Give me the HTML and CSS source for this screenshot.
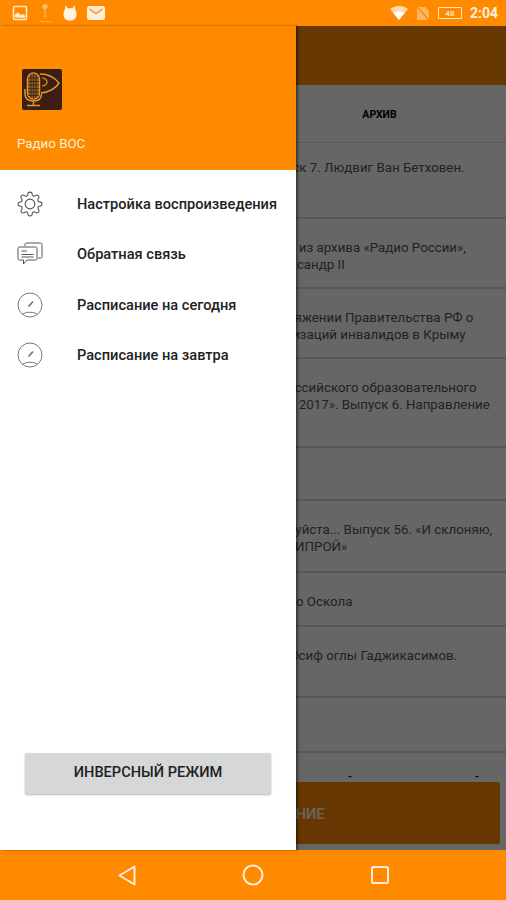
FILE: index.html
```html
<!DOCTYPE html>
<html lang="ru">

<head>
      <meta charset="UTF-8">
      <meta name="viewport" content="width=device-width, initial-scale=1.0">
      <title>Радио ВОС</title>
      <link rel="stylesheet" href="styles.css">
</head>

<body>
      <div class="screen">

            <!-- status bar -->
            <div class="status-bar">
                  <div class="status-left">
                        <svg class="st-icon" width="16" height="16" viewBox="0 0 16 16">
                              <rect x="1.5" y="1.5" width="13" height="13" rx="1.5" fill="none" stroke="#ffe6c8" stroke-width="1.6" />
                              <path d="M3 12.5V9.5l3-2 3 2.5 2-1 2 1.500v2.500z" fill="#ffe6c8" />
                        </svg>
                        <svg class="st-icon dim" width="16" height="20" viewBox="0 0 16 20">
                              <circle cx="8" cy="3.5" r="2.6" fill="#ffe6c8" />
                              <path d="M8 6v6" stroke="#ffd09a" stroke-width="1.4" />
                              <circle cx="8" cy="13" r="2" fill="#ffb765" />
                              <path d="M2 18.5h12" stroke="#ffc585" stroke-width="1" />
                        </svg>
                        <svg class="st-icon" width="16" height="16" viewBox="0 0 16 16">
                              <path d="M3.500 0l2 3.300h5L12.500 0l.6 4.400c.7 1 1.400 2.300 1.400 4.300 0 4.600-2.200 6.800-6.500 6.800s-6.500-2.200-6.500-6.800c0-2 .7-3.300 1.400-4.300z" fill="#fff3e4" />
                        </svg>
                        <svg class="st-icon" width="18" height="14" viewBox="0 0 18 14">
                              <rect width="18" height="14" rx="2.500" fill="#ffeedd" />
                              <path d="M2.500 3l6.500 4.500L15.500 3" fill="none" stroke="#ff9c2c" stroke-width="1.600" />
                        </svg>
                  </div>
                  <div class="status-right">
                        <svg width="18" height="14" viewBox="0 0 18 14">
                              <path d="M0 3C5-1 13-1 18 3L9 14z" fill="#ffd9ac" />
                              <path d="M3.500 7.200c3.300-2.200 7.700-2.200 11 0L9 14z" fill="#fff" />
                        </svg>
                        <svg width="14" height="13" viewBox="0 0 14 13">
                              <path d="M1 0h8l4 4v9H1z" fill="#ffb664" />
                              <path d="M1 0l12 13" stroke="#ff8a00" stroke-width="1.500" />
                        </svg>
                        <div class="battery"><span class="battery-level">48</span></div>
                        <span class="clock">2:04</span>
                  </div>
            </div>

            <div class="main">

                  <!-- page behind the drawer -->
                  <div class="app">
                        <div class="app-bar"></div>
                        <div class="tabs">
                              <div class="tab"></div>
                              <div class="tab">АРХИВ</div>
                        </div>
                        <div class="list">
                              <div class="row h76 first"><p>&nbsp;&nbsp;&nbsp;Выпуск 7. Людвиг Ван Бетховен.</p></div>
                              <div class="row h70"><p>&nbsp;&nbsp;Песни из архива «Радио России»,<br>И. Александр II</p></div>
                              <div class="row h70"><p>распоряжении Правительства РФ о<br>&nbsp;&nbsp;организаций инвалидов в Крыму</p></div>
                              <div class="row h89"><p>&nbsp;для российского образовательного<br>&nbsp;&nbsp;&nbsp;«Путь 2017». Выпуск 6. Направление</p></div>
                              <div class="row h53"></div>
                              <div class="row h72"><p>&nbsp;Пожалуйста... Выпуск 56. «И склоняю,<br>&nbsp;И НЕ СИПРОЙ»</p></div>
                              <div class="row h54"><p>&nbsp;Старого Оскола</p></div>
                              <div class="row h71"><p>&nbsp;Поэт Юсиф оглы Гаджикасимов.</p></div>
                              <div class="row h55"></div>
                              <div class="row-last">
                                    <span class="dash">-</span>
                                    <span class="dash">-</span>
                              </div>
                        </div>
                        <div class="play-wrap">
                              <div class="play-btn">ВОСПРОИЗВЕДЕНИЕ</div>
                        </div>
                  </div>

                  <div class="scrim"></div>

                  <!-- drawer -->
                  <div class="drawer">
                        <div class="drawer-head">
                              <svg class="logo" width="40" height="41" viewBox="0 0 40 41">
                                    <rect width="40" height="41" rx="2" fill="#3a1f12" />
                                    <rect x="5.500" y="4" width="12" height="26" rx="6" fill="#8a5a22" stroke="#e0962c" stroke-width="1.500" />
                                    <path d="M6 9h11M6 12.500h11M6 16h11M6 19.500h11M6 23h11M6 26.500h11M9 5v24M11.500 4v26M14 5v24" stroke="#3a1f12" stroke-width=".8" />
                                    <path d="M3 20v5c0 5 4 7 8.500 7s8-2 8-7" fill="none" stroke="#e0962c" stroke-width="1.500" />
                                    <path d="M11.500 32v4M5 36.500h13" stroke="#e0962c" stroke-width="1.500" />
                                    <path d="M18 5c8 0 15 4 19 9-3 5-10 9-18 10" fill="none" stroke="#e0962c" stroke-width="1.500" />
                                    <path d="M20 9c3 0 5 2 5 4s-2 4-5 4" fill="none" stroke="#e0962c" stroke-width="1.200" />
                              </svg>
                              <span class="drawer-title">Радио ВОС</span>
                        </div>

                        <ul class="menu">
                              <li class="menu-item">
                                    <svg class="menu-icon" width="26" height="26" viewBox="0 0 24 24">
                                          <circle cx="12" cy="12" r="4.500" />
                                          <path d="M19.400 15a1.650 1.650 0 0 0 .33 1.820l.06.06a2 2 0 0 1 0 2.830 2 2 0 0 1-2.830 0l-.06-.06a1.650 1.650 0 0 0-1.820-.33 1.650 1.650 0 0 0-1 1.510V21a2 2 0 0 1-2 2 2 2 0 0 1-2-2v-.09A1.650 1.650 0 0 0 9 19.400a1.650 1.650 0 0 0-1.820.33l-.06.06a2 2 0 0 1-2.830 0 2 2 0 0 1 0-2.830l.06-.06a1.650 1.650 0 0 0 .33-1.820 1.650 1.650 0 0 0-1.510-1H3a2 2 0 0 1-2-2 2 2 0 0 1 2-2h.09A1.650 1.650 0 0 0 4.600 9a1.650 1.650 0 0 0-.33-1.820l-.06-.06a2 2 0 0 1 0-2.830 2 2 0 0 1 2.830 0l.06.06a1.650 1.650 0 0 0 1.820.33H9a1.650 1.650 0 0 0 1-1.510V3a2 2 0 0 1 2-2 2 2 0 0 1 2 2v.09a1.650 1.650 0 0 0 1 1.510 1.650 1.650 0 0 0 1.820-.33l.06-.06a2 2 0 0 1 2.830 0 2 2 0 0 1 0 2.830l-.06.06a1.650 1.650 0 0 0-.33 1.820V9a1.650 1.650 0 0 0 1.510 1H21a2 2 0 0 1 2 2 2 2 0 0 1-2 2h-.09a1.650 1.650 0 0 0-1.510 1z" />
                                    </svg>
                                    <span>Настройка воспроизведения</span>
                              </li>
                              <li class="menu-item">
                                    <svg class="menu-icon" width="26" height="24" viewBox="0 0 26 24">
                                          <path d="M8 4V2.500C8 1.500 8.500 1 9.500 1h14c1 0 1.500.5 1.500 1.500v12c0 1-.5 1.500-1.500 1.500H21" />
                                          <path d="M2.500 5h16c1 0 1.500.5 1.500 1.500v10c0 1-.5 1.500-1.500 1.500H10l-3.500 4v-4h-4C1.500 18 1 17.500 1 16.500v-10C1 5.500 1.500 5 2.500 5z" />
                                          <path d="M4.500 9H10M4.500 12.500h12M4.500 15h12" />
                                    </svg>
                                    <span>Обратная связь</span>
                              </li>
                              <li class="menu-item">
                                    <svg class="menu-icon gauge" width="26" height="26" viewBox="0 0 26 26">
                                          <circle cx="13" cy="13" r="12" />
                                          <path d="M5.500 22.500C8 19.500 18 19.500 20.500 22.500" />
                                          <path class="needle" d="M11.500 14.500L16 9.500" />
                                    </svg>
                                    <span>Расписание на сегодня</span>
                              </li>
                              <li class="menu-item">
                                    <svg class="menu-icon gauge" width="26" height="26" viewBox="0 0 26 26">
                                          <circle cx="13" cy="13" r="12" />
                                          <path d="M5.500 22.500C8 19.500 18 19.500 20.500 22.500" />
                                          <path class="needle" d="M11.500 14.500L16 9.500" />
                                    </svg>
                                    <span>Расписание на завтра</span>
                              </li>
                        </ul>

                        <div class="drawer-foot">
                              <button class="invert-btn">ИНВЕРСНЫЙ РЕЖИМ</button>
                        </div>
                  </div>
            </div>

            <!-- nav bar -->
            <div class="nav-bar">
                  <svg width="18" height="21" viewBox="0 0 18 21">
                        <path d="M16.500 1.500v18L1.500 10.500z" />
                  </svg>
                  <svg width="22" height="22" viewBox="0 0 22 22">
                        <circle cx="11" cy="11" r="9.500" />
                  </svg>
                  <svg width="20" height="20" viewBox="0 0 20 20">
                        <rect x="2" y="2" width="16" height="16" rx="1.500" />
                  </svg>
            </div>
      </div>
</body>

</html>
```

FILE: styles.css
```css
* {
      padding: 0;
      margin: 0;
      box-sizing: border-box;
      font-family: Roboto, "Liberation Sans", sans-serif;
}

body {
      background-color: #ff8a00;
}

.screen {
      display: flex;
      flex-direction: column;
      width: 506px;
      height: 900px;
      overflow: hidden;
}

/* ---- status bar ---- */

.status-bar {
      display: flex;
      justify-content: space-between;
      align-items: center;
      height: 26px;
      padding: 0 8px 0 12px;
      background-color: #ff8a00;
}

.status-left {
      display: flex;
      align-items: center;
      gap: 9px;
}

.status-right {
      display: flex;
      align-items: center;
      gap: 8px;
}

.dim {
      opacity: 0.55;
}

.battery {
      display: flex;
      justify-content: center;
      align-items: center;
      width: 24px;
      height: 12px;
      border: 1px solid #ffe6c8;
      border-radius: 1px;
}

.battery-level {
      font-size: 8px;
      font-weight: 700;
      color: #ffe6c8;
}

.clock {
      font-size: 14px;
      font-weight: 700;
      color: #ffeedd;
}

/* ---- main area ---- */

.main {
      position: relative;
      flex: 1;
      min-height: 0;
}

.app {
      display: flex;
      flex-direction: column;
      height: 100%;
      background-color: #fff;
}

.app-bar {
      height: 59px;
      background-color: #ff8a00;
}

.tabs {
      display: grid;
      grid-template-columns: 1fr 1fr;
      height: 58px;
      border-bottom: 1px solid #ffd8b0;
}

.tab {
      display: flex;
      justify-content: center;
      align-items: center;
      padding-top: 1px;
      font-size: 10.5px;
      font-weight: 700;
      color: #000;
}

.list {
      flex: 1;
      min-height: 0;
}

.row {
      padding: 20px 0 0 250px;
      border-bottom: 2px solid #d8d8d8;
      font-size: 13.3px;
      line-height: 17px;
      color: #555;
      white-space: nowrap;
}

.first {
      padding-top: 16px;
}

.h53 { height: 53px; }
.h54 { height: 54px; }
.h55 { height: 55px; }
.h70 { height: 70px; }
.h71 { height: 71px; }
.h72 { height: 72px; }
.h76 { height: 76px; }
.h89 { height: 89px; }

.row-last {
      display: grid;
      grid-template-columns: 352px 127px;
      height: 29px;
      padding-top: 17px;
      font-size: 11px;
      font-weight: 700;
      color: #222;
}

.dash {
      text-align: right;
}

.play-wrap {
      padding: 0 6px 6px;
}

.play-btn {
      display: flex;
      justify-content: center;
      align-items: center;
      height: 62px;
      padding-top: 2px;
      border-radius: 2px;
      background-color: #ff8a00;
      font-size: 14.6px;
      font-weight: 500;
      color: #fff;
}

.scrim {
      position: absolute;
      inset: 0;
      background-color: rgba(0, 0, 0, 0.6);
}

/* ---- drawer ---- */

.drawer {
      position: absolute;
      top: 0;
      bottom: 0;
      left: 0;
      display: flex;
      flex-direction: column;
      width: 296px;
      background-color: #fff;
      box-shadow: 2px 0 2px rgba(0, 0, 0, 0.45);
}

.drawer-head {
      display: flex;
      flex-direction: column;
      align-items: flex-start;
      height: 144px;
      padding: 43px 0 0 17px;
      background-color: #ff8a00;
}

.logo {
      margin-left: 5px;
}

.drawer-title {
      margin-top: 26px;
      font-size: 13.3px;
      line-height: 15px;
      color: #ffeedd;
}

.menu {
      display: flex;
      flex-direction: column;
      padding-top: 8.5px;
      list-style: none;
}

.menu-item {
      display: flex;
      align-items: center;
      height: 50.5px;
      font-size: 14.6px;
      font-weight: 500;
      color: #222;
}

.menu-icon {
      flex: none;
      margin: 0 34px 0 17px;
      fill: none;
      stroke: #555;
      stroke-width: 1;
}

.gauge {
      stroke: #777;
}

.needle {
      stroke-width: 1.8;
}

.drawer-foot {
      margin-top: auto;
      padding: 0 25px 56px;
}

.invert-btn {
      width: 100%;
      height: 41px;
      padding-bottom: 3px;
      border: none;
      border-radius: 2px;
      background-color: #d6d8d8;
      box-shadow: 0 1px 2px rgba(0, 0, 0, 0.3);
      font-size: 14.6px;
      font-weight: 500;
      color: #222;
}

/* ---- nav bar ---- */

.nav-bar {
      display: grid;
      grid-template-columns: repeat(3, 126.5px);
      align-items: center;
      justify-items: center;
      height: 50px;
      padding-left: 63.5px;
      background-color: #ff8a00;
}

.nav-bar svg {
      fill: none;
      stroke: #ffeedd;
      stroke-width: 2;
      stroke-linejoin: round;
}
```
